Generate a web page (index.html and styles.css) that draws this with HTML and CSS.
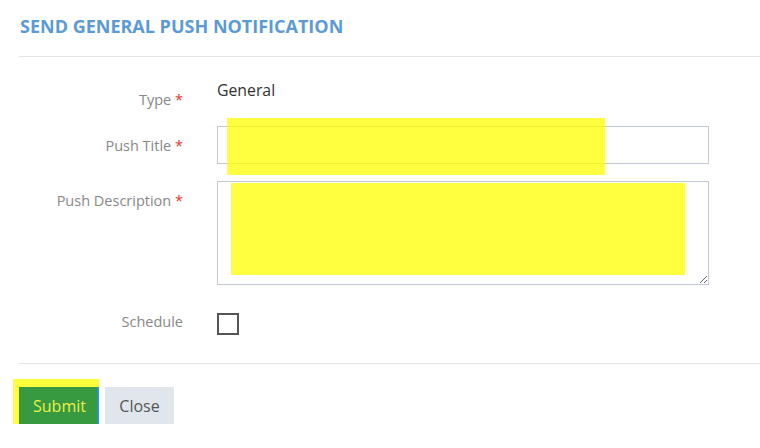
FILE: index.html
```html
<!DOCTYPE html>
<html lang="en">
<head>
    <meta charset="UTF-8">
    <meta name="viewport" content="width=device-width, initial-scale=1.0">
    <title>Send General Push Notification</title>
    <link rel="stylesheet" href="styles.css">
</head>
<body>
    <div class="modal">
        <header class="modal-header">
            <h2>Send General Push Notification</h2>
        </header>

        <form class="push-form">
            <div class="form-row row-type">
                <label class="form-label">Type <span class="req">*</span></label>
                <div class="form-value">General</div>
            </div>

            <div class="form-row row-title">
                <label class="form-label" for="pushTitle">Push Title <span class="req">*</span></label>
                <div class="field">
                    <input type="text" id="pushTitle" class="form-input">
                    <span class="redact redact-title"></span>
                </div>
            </div>

            <div class="form-row row-desc">
                <label class="form-label" for="pushDesc">Push Description <span class="req">*</span></label>
                <div class="field">
                    <textarea id="pushDesc" class="form-input form-textarea"></textarea>
                    <span class="redact redact-desc"></span>
                </div>
            </div>

            <div class="form-row row-schedule">
                <label class="form-label" for="schedule">Schedule</label>
                <div class="field">
                    <input type="checkbox" id="schedule" class="form-check">
                </div>
            </div>
        </form>

        <footer class="modal-footer">
            <span class="redact-frame"></span>
            <button type="button" class="btn btn-submit">Submit</button>
            <button type="button" class="btn btn-close">Close</button>
        </footer>
    </div>
</body>
</html>
```

FILE: styles.css
```css
body {
    font-family: "Open Sans", Arial, sans-serif;
    margin: 0;
    padding: 0;
    background-color: white;
    color: #333;
}

.modal {
    width: 760px;
}

.modal-header {
    margin-left: 19px;
    padding: 14px 0 18px 1px;
    border-bottom: 1px solid #e5e5e5;
}

.modal-header h2 {
    margin: 0;
    font-size: 18px;
    line-height: 24px;
    font-weight: bold;
    text-transform: uppercase;
    color: #5b9bd5;
}

.push-form {
    padding: 23px 0 0 19px;
    margin: 0;
}

.form-row {
    display: grid;
    grid-template-columns: 164px 492px;
    column-gap: 34px;
    align-items: start;
}

.row-type {
    margin-bottom: 16px;
}

.row-title {
    margin-bottom: 17px;
}

.row-desc {
    margin-bottom: 17px;
}

.form-label {
    text-align: right;
    font-size: 14.5px;
    line-height: 20px;
    padding-top: 10px;
    color: #888;
}

.req {
    color: #e8312f;
}

.form-value {
    font-size: 15.8px;
    line-height: 20px;
    color: #333;
}

.field {
    position: relative;
}

.form-input {
    display: block;
    box-sizing: border-box;
    width: 492px;
    height: 38px;
    margin: 0;
    padding: 6px 10px;
    border: 1px solid #c3c9d6;
    border-radius: 0;
    font-family: inherit;
    font-size: 14px;
    outline: none;
}

.form-textarea {
    height: 104px;
    resize: vertical;
}

.form-check {
    appearance: none;
    -webkit-appearance: none;
    display: block;
    box-sizing: border-box;
    width: 22px;
    height: 22px;
    margin: 11px 0 0;
    border: 2px solid #555;
    background-color: white;
}

/* redaction marks over the screenshot fields */
.redact {
    position: absolute;
    background-color: rgba(255, 255, 0, 0.75);
    pointer-events: none;
}

.redact-title {
    left: 10px;
    top: -8px;
    width: 378px;
    height: 57px;
}

.redact-desc {
    left: 14px;
    top: 2px;
    width: 454px;
    height: 92px;
}

.modal-footer {
    position: relative;
    margin: 28px 0 0 19px;
    padding-top: 23px;
    border-top: 1px solid #e5e5e5;
    display: flex;
    gap: 6px;
}

.redact-frame {
    position: absolute;
    left: -6px;
    top: 15px;
    width: 86px;
    height: 54px;
    background-color: #ffff3c;
}

.btn {
    position: relative;
    height: 37px;
    padding: 0 14px;
    border: none;
    border-radius: 0;
    font-family: inherit;
    font-size: 16px;
    cursor: pointer;
}

.btn-submit {
    width: 80px;
    background-color: #379a40;
    color: #eaf04c;
    border-right: 2px solid #2f8fd8;
}

.btn-close {
    width: 69px;
    background-color: #e1e5ec;
    color: #555;
}
```
